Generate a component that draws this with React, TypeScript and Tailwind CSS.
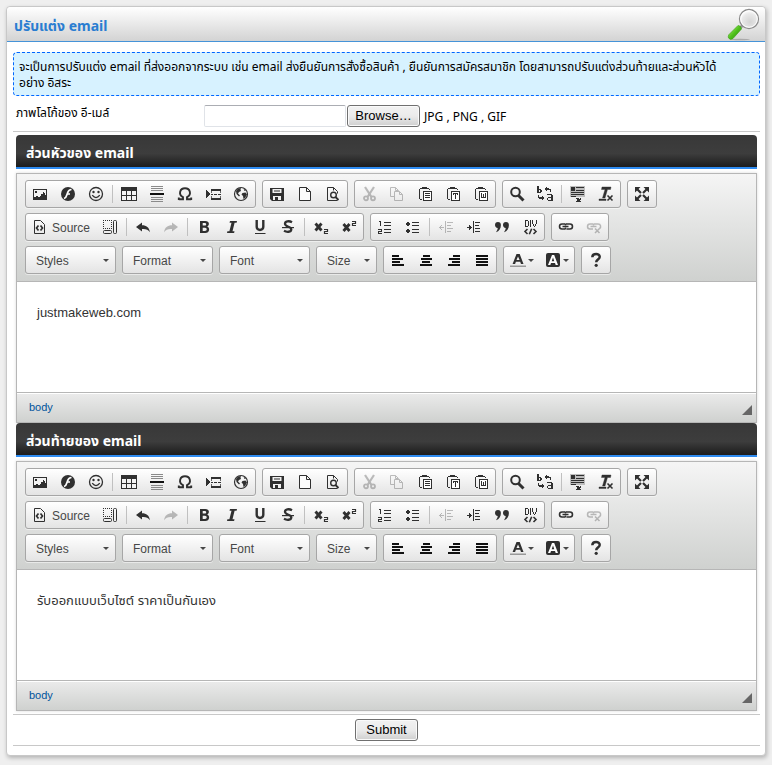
import React from 'react';
import clsx from 'clsx';

function Icon({ children, crisp = true }: { children: React.ReactNode; crisp?: boolean }) {
  return (
    <svg width="16" height="16" viewBox="0 0 16 16" fill="#303030" shapeRendering={crisp ? 'crispEdges' : 'auto'} aria-hidden="true" className="shrink-0">
      {children}
    </svg>
  );
}

const clipboard = (
  <g>
    <path d="M5 1h5v1h2v1H3V2h2zM2 3h1v1H2zM2 4h1v9H2zM3 13h2v1H3zM12 3h1v1h-1z" />
    <path d="M6 5h9v10H6z" />
    <path d="M7 6h7v8H7z" fill="#fff" />
  </g>
);

const icons: Record<string, React.ReactNode> = {
  image: (
    <Icon>
      <path d="M1 3h14v11H1z" />
      <path d="M2 4h12v9H2z" fill="#f4f4f4" />
      <path d="M3 5h2v2H3zM11 6h1v1h1v2h1v4H2v-2h2v-1h2v1h2v-1h1V8h2z" />
    </Icon>
  ),
  flash: (
    <Icon crisp={false}>
      <circle cx="8" cy="8" r="7" />
      <path d="M11.5 3.5C8 3.500 8 6 7 8.500 6.500 10.500 5.500 12 4 12.500M6.500 8H10" stroke="#fff" strokeWidth="1.700" fill="none" />
    </Icon>
  ),
  smiley: (
    <Icon crisp={false}>
      <circle cx="8" cy="8" r="6.500" fill="none" stroke="#303030" strokeWidth="1.300" />
      <circle cx="5.500" cy="6" r="1.200" />
      <circle cx="10.500" cy="6" r="1.200" />
      <path d="M4.200 9.200Q8 14 11.800 9.200" fill="none" stroke="#303030" strokeWidth="1.300" />
    </Icon>
  ),
  table: (
    <Icon>
      <path d="M0 1h16v14H0z" />
      <path d="M1 5h4v4H1zM6 5h4v4H6zM11 5h4v4h-4zM1 10h4v4H1zM6 10h4v4H6zM11 10h4v4h-4z" fill="#f4f4f4" />
    </Icon>
  ),
  rule: (
    <Icon>
      <path d="M2 0h12v1H2zM2 2h12v1H2zM2 4h12v1H2zM2 11h12v1H2zM2 13h12v1H2zM2 15h12v1H2z" fill="#8a8a8a" />
      <path d="M1 7h14v2H1z" fill="#111" />
    </Icon>
  ),
  omega: (
    <Icon crisp={false}>
      <path d="M1.800 14v-2.500M1.800 13.200h4.200V11.200C1 8.500 2.800 2.200 8 2.200S15 8.500 10 11.200v2h4.200M14.200 14v-2.500" fill="none" stroke="#303030" strokeWidth="1.900" />
    </Icon>
  ),
  pagebreak: (
    <Icon>
      <path d="M1 4h1v1h1v1h1v1h1v2H4v1H3v1H2v1H1zM6 3h10v2H6zM6 8h2v1H6zM9 8h3v1H9zM13 8h3v1h-3zM6 12h10v2H6z" />
      <path d="M6 5h1v2H6zM15 5h1v2h-1zM6 10h1v2H6zM15 10h1v2h-1z" fill="#666" />
    </Icon>
  ),
  globe: (
    <Icon crisp={false}>
      <circle cx="8" cy="8" r="6.500" fill="none" stroke="#303030" strokeWidth="1.200" />
      <path d="M3 5l2-2.500 3-.5-.5 1.500L8 5 6 6 5 7.500 7 9.500 6 10.500 3.500 8zM9.500 7l3-.5 1.500 2-2 3.500-1.500 1-.5-3-1.500-1.500zM10.500 2.500l2.500 2-1.500.5z" />
    </Icon>
  ),
  save: (
    <Icon crisp={false}>
      <path d="M1 2h14v13H3l-2-2z" />
      <path d="M3.500 3h9v4h-9zM4 10h8v4H4z" fill="#f2f2f2" />
      <path d="M6 11h3v3H6zM5 4.500h6v1H5z" />
    </Icon>
  ),
  page: (
    <Icon crisp={false}>
      <path d="M2.500 1.500h7l4 4v9h-11zM9.500 1.500v4h4" fill="#fbfbfb" stroke="#303030" />
    </Icon>
  ),
  preview: (
    <Icon crisp={false}>
      <path d="M12.500 14.500h-10v-13h6l4 4v2M8.500 1.500v3" fill="none" stroke="#303030" />
      <circle cx="8.500" cy="9" r="2.800" fill="#f4f4f4" stroke="#303030" strokeWidth="1.400" />
      <path d="M10.500 11l3 3" stroke="#303030" strokeWidth="1.800" />
    </Icon>
  ),
  cut: (
    <Icon crisp={false}>
      <path d="M4 1l6.500 10M13 1L6.500 11" stroke="#303030" strokeWidth="2.200" />
      <circle cx="5" cy="12.300" r="2" fill="none" stroke="#303030" strokeWidth="1.800" />
      <circle cx="12" cy="12.300" r="2" fill="none" stroke="#303030" strokeWidth="1.800" />
    </Icon>
  ),
  copy: (
    <Icon crisp={false}>
      <path d="M5.500 10.500h-4v-9h5l3 3M6.500 1.500v3h3M5.500 5.500h5l3 3v6h-8zM10.500 5.500v3h3" fill="none" stroke="#303030" />
    </Icon>
  ),
  paste: (
    <Icon>
      {clipboard}
      <path d="M8 7h5v1H8zM8 9h5v1H8zM8 11h5v1H8z" />
    </Icon>
  ),
  pasteText: (
    <Icon>
      {clipboard}
      <path d="M8 7h5v2h-1V8h-1v5h-1V8H9v1H8z" />
    </Icon>
  ),
  pasteWord: (
    <Icon>
      {clipboard}
      <path d="M8 7h1v4h1V8h1v3h1V7h1v5H8z" />
    </Icon>
  ),
  find: (
    <Icon crisp={false}>
      <circle cx="6.500" cy="6" r="4.300" fill="none" stroke="#303030" strokeWidth="2" />
      <path d="M9.500 9.500l5 5" stroke="#303030" strokeWidth="3" />
    </Icon>
  ),
  replace: (
    <Icon>
      <path d="M0 0h2v3h2v1h1v2H4v1H0zM2 4v2h1V4zM10 8h5v1h1v6h-5v-1h-1v-2h1v-1h3V9h-4zM11 12v2h3v-2z" fillRule="evenodd" />
      <path d="M9 1h1v1h2v1h2v3h-1V4h-3v1H9V4H8V2h1zM1 9h1v2h3v-1h1v1h1v2H6v1H5v-1H2v-1H1z" />
    </Icon>
  ),
  selectAll: (
    <Icon>
      <path d="M0 0h15v11H0z" fill="#bdbdbd" />
      <path d="M1 1h4v4H1zM6 1h8v1H6zM6 4h8v1H6zM1 6h13v1H1zM1 8h13v1H1zM1 10h5v1H1zM6 12h3v1h1v-1h1v2h-1v1h1v1H6v-1h1v-2H6z" />
    </Icon>
  ),
  removeFormat: (
    <Icon crisp={false}>
      <path d="M4 1h9l-.5 2.500h-3L7 12H4.500L7 3.500H3.500zM1 13h7v1.500H1z" stroke="#303030" strokeWidth=".4" />
      <path d="M9.500 9.500l5 5M14.500 9.500l-5 5" stroke="#303030" strokeWidth="1.600" />
    </Icon>
  ),
  maximize: (
    <Icon crisp={false}>
      <path d="M1 1h5.500L1 6.500zM15 1H9.500L15 6.500zM1 15h5.500L1 9.500zM15 15H9.500L15 9.500z" />
      <path d="M2 2l5 5M14 2L9 7M2 14l5-5M14 14L9 9" stroke="#303030" strokeWidth="2.200" />
    </Icon>
  ),
  source: (
    <Icon crisp={false}>
      <path d="M2.500 1.500h6l4 4v9h-10z" fill="none" stroke="#303030" />
      <path d="M6.500 6.500L4.500 9l2 2.500M8.500 6.500l2 2.500-2 2.500" fill="none" stroke="#303030" strokeWidth="1.700" />
    </Icon>
  ),
  blocks: (
    <Icon crisp={false}>
      <path d="M1.500 1v9M1 1.500h9M9.500 1v9M1 9.500h9" fill="none" stroke="#303030" strokeDasharray="1 1" />
      <rect x="1.500" y="11.500" width="8" height="3" rx="1" fill="none" stroke="#303030" />
      <rect x="11.500" y="1.500" width="3" height="13" rx="1" fill="none" stroke="#303030" />
    </Icon>
  ),
  undo: (
    <Icon crisp={false}>
      <path d="M1 8L7 3.500v2.800c4.500 0 7 2 8 7-2-2.500-4-3.500-8-3.200v2.400z" />
    </Icon>
  ),
  redo: (
    <Icon crisp={false}>
      <path d="M15 8L9 3.500v2.800c-4.500 0-7 2-8 7 2-2.500 4-3.500 8-3.200v2.400z" />
    </Icon>
  ),
  bold: (
    <Icon crisp={false}>
      <path d="M4 2h5.300c4.500 0 4.500 4.600 1.800 5.500C14.300 8.500 13.800 14 9.300 14H4zM6.700 4v2.600h2c2 0 2-2.600 0-2.600zM6.700 8.700v3.200h2.300c2.300 0 2.300-3.200 0-3.200z" fillRule="evenodd" />
    </Icon>
  ),
  italic: (
    <Icon crisp={false}>
      <path d="M6 2h7l-.4 1.800h-2L8.500 12.200h2l-.4 1.800H3l.4-1.800h2L7.500 3.800h-2z" />
    </Icon>
  ),
  underline: (
    <Icon crisp={false}>
      <path d="M3.500 1h2.400v6.500c0 3 4.200 3 4.200 0V1h2.400v7c0 5.500-9 5.500-9 0zM3 14h10.500v1H3z" />
    </Icon>
  ),
  strike: (
    <Icon crisp={false}>
      <path d="M12 3.200C9 1.500 4.800 2.200 5 5c.3 3 6.500 2.500 6.300 5.300-.2 3-4.500 3-7.300 1.500" fill="none" stroke="#303030" strokeWidth="2.300" />
      <path d="M2 8h12v1.200H2z" />
    </Icon>
  ),
  sub: (
    <Icon crisp={false}>
      <path d="M2.500 4.500l6 7M8.500 4.500l-6 7" stroke="#303030" strokeWidth="2.800" />
      <path d="M11 10.500h3.500v2H11.500v2H15" fill="none" stroke="#303030" strokeWidth="1.200" />
    </Icon>
  ),
  sup: (
    <Icon crisp={false}>
      <path d="M2.500 5l6 7M8.500 5l-6 7" stroke="#303030" strokeWidth="2.800" />
      <path d="M11 2.500h3.500v2H11.500v2H15" fill="none" stroke="#303030" strokeWidth="1.200" />
    </Icon>
  ),
  numbered: (
    <Icon>
      <path d="M2 2h2v5H3V3H2zM1 10h4v3H2v1h3v1H1v-3h3v-1H1zM7 3h7v1H7zM7 6h7v1H7zM7 10h7v1H7zM7 13h7v1H7z" />
    </Icon>
  ),
  bulleted: (
    <Icon>
      <path d="M2 3h2v1h1v2H4v1H2V6H1V4h1zM2 10h2v1h1v2H4v1H2v-1H1v-2h1zM7 3h7v1H7zM7 6h7v1H7zM7 10h7v1H7zM7 13h7v1H7z" />
    </Icon>
  ),
  outdent: (
    <Icon>
      <path d="M7 2h1v12H7zM9 3h6v1H9zM9 6h4v1H9zM9 9h6v1H9zM9 12h4v1H9zM1 8h5v1H1zM2 7h1v3H2zM3 6h1v1H3zM3 10h1v1H3z" />
    </Icon>
  ),
  indent: (
    <Icon>
      <path d="M7 2h1v12H7zM9 3h5v1H9zM9 6h4v1H9zM9 9h5v1H9zM9 12h5v1H9zM1 8h5v1H1zM4 7h1v3H4zM3 6h1v5H3z" />
    </Icon>
  ),
  quote: (
    <Icon crisp={false}>
      <path d="M1 6a2.900 2.900 0 1 1 5.900 0c0 3.500-1.600 6.300-4.900 7.300 1-1.500 1.700-2.800 1.700-4.200C2 8.800 1 7.500 1 6zM9 6a2.900 2.900 0 1 1 5.900 0c0 3.500-1.600 6.300-4.900 7.300 1-1.500 1.700-2.800 1.700-4.200C10 8.800 9 7.500 9 6z" />
    </Icon>
  ),
  div: (
    <Icon>
      <path d="M3 1h3v1h1v5H6v1H3zM4 2v5h2V2zM8 1h1v7H8zM10 1h1v4h1v2h1V5h1V1h1v4h-1v2h-1v1h-1V7h-1V5h-1z" fillRule="evenodd" />
      <path d="M5.500 10L3 12.500 5.500 15M11.500 10l2.500 2.500-2.500 2.500M9.700 9.800l-2.400 5.400" fill="none" stroke="#303030" strokeWidth="1.600" shapeRendering="auto" />
    </Icon>
  ),
  link: (
    <Icon crisp={false}>
      <path d="M7 5H4C.7 5 .7 10 4 10h3M8 5h4c3.300 0 3.300 5 0 5H8.500M4.500 7.500h6" fill="none" stroke="#303030" strokeWidth="1.600" />
      <path d="M7.500 4.500v2M7.500 8.500v2" stroke="#303030" strokeWidth="1.500" />
    </Icon>
  ),
  unlink: (
    <Icon crisp={false}>
      <path d="M7 5H4C.7 5 .7 10 4 10h3M8 5h4c3 0 3.300 3.500 1.500 4.500M4.500 7.500h6M7.500 4.500v2M9 9.500l4.500 4.500M13.500 9.500L9 14" fill="none" stroke="#303030" strokeWidth="1.500" />
    </Icon>
  ),
  left: (
    <Icon>
      <path d="M2 3h7v2H2zM2 6h11v2H2zM2 9h8v2H2zM2 12h12v2H2z" fill="#111" />
    </Icon>
  ),
  center: (
    <Icon>
      <path d="M5 3h7v2H5zM3 6h11v2H3zM4 9h8v2H4zM2 12h12v2H2z" fill="#111" />
    </Icon>
  ),
  right: (
    <Icon>
      <path d="M7 3h7v2H7zM3 6h11v2H3zM6 9h8v2H6zM2 12h12v2H2z" fill="#111" />
    </Icon>
  ),
  justify: (
    <Icon>
      <path d="M2 3h12v2H2zM2 6h12v2H2zM2 9h12v2H2zM2 12h12v2H2z" fill="#111" />
    </Icon>
  ),
  textColor: (
    <Icon crisp={false}>
      <path d="M6.500 2h3.200L13.500 12H11l-.8-2.200H5.900L5.100 12H2.600zM8 4.500L6.500 8h3.100z" fillRule="evenodd" />
      <path d="M0 13.500h16V15H0z" fill="#999" />
    </Icon>
  ),
  bgColor: (
    <Icon crisp={false}>
      <rect x="1" y="1" width="14" height="14" rx="2" />
      <path d="M7 3h2.200L13 13h-2.300L10 11H6l-.7 2H3zM8 5.500L6.700 9.200h2.600z" fill="#fff" fillRule="evenodd" />
    </Icon>
  ),
  help: (
    <Icon crisp={false}>
      <path d="M4.300 5.200C4.500.9 11.900 1.200 11.700 5c-.1 2.500-3.500 2.700-3.500 5.200" fill="none" stroke="#303030" strokeWidth="2.500" />
      <circle cx="8.200" cy="13.300" r="1.600" />
    </Icon>
  ),
};

type Item = { icon: string; label: string; disabled?: boolean; text?: string; menu?: boolean } | '|';

const rowOne: Item[][] = [
  [
    { icon: 'image', label: 'Image' },
    { icon: 'flash', label: 'Flash' },
    { icon: 'smiley', label: 'Smiley' },
    '|',
    { icon: 'table', label: 'Table' },
    { icon: 'rule', label: 'Insert Horizontal Line' },
    { icon: 'omega', label: 'Insert Special Character' },
    { icon: 'pagebreak', label: 'Insert Page Break' },
    { icon: 'globe', label: 'IFrame' },
  ],
  [
    { icon: 'save', label: 'Save' },
    { icon: 'page', label: 'New Page' },
    { icon: 'preview', label: 'Preview' },
  ],
  [
    { icon: 'cut', label: 'Cut', disabled: true },
    { icon: 'copy', label: 'Copy', disabled: true },
    { icon: 'paste', label: 'Paste' },
    { icon: 'pasteText', label: 'Paste as plain text' },
    { icon: 'pasteWord', label: 'Paste from Word' },
  ],
  [
    { icon: 'find', label: 'Find' },
    { icon: 'replace', label: 'Replace' },
    '|',
    { icon: 'selectAll', label: 'Select All' },
    { icon: 'removeFormat', label: 'Remove Format' },
  ],
  [{ icon: 'maximize', label: 'Maximize' }],
];

const rowTwo: Item[][] = [
  [
    { icon: 'source', label: 'Source', text: 'Source' },
    { icon: 'blocks', label: 'Show Blocks' },
    '|',
    { icon: 'undo', label: 'Undo' },
    { icon: 'redo', label: 'Redo', disabled: true },
    '|',
    { icon: 'bold', label: 'Bold' },
    { icon: 'italic', label: 'Italic' },
    { icon: 'underline', label: 'Underline' },
    { icon: 'strike', label: 'Strike Through' },
    '|',
    { icon: 'sub', label: 'Subscript' },
    { icon: 'sup', label: 'Superscript' },
  ],
  [
    { icon: 'numbered', label: 'Numbered List' },
    { icon: 'bulleted', label: 'Bulleted List' },
    '|',
    { icon: 'outdent', label: 'Decrease Indent', disabled: true },
    { icon: 'indent', label: 'Increase Indent' },
    { icon: 'quote', label: 'Block Quote' },
    { icon: 'div', label: 'Create Div Container' },
  ],
  [
    { icon: 'link', label: 'Link' },
    { icon: 'unlink', label: 'Unlink', disabled: true },
  ],
];

const rowThree: Item[][] = [
  [
    { icon: 'left', label: 'Align Left' },
    { icon: 'center', label: 'Center' },
    { icon: 'right', label: 'Align Right' },
    { icon: 'justify', label: 'Justify' },
  ],
  [
    { icon: 'textColor', label: 'Text Color', menu: true },
    { icon: 'bgColor', label: 'Background Color', menu: true },
  ],
  [{ icon: 'help', label: 'About' }],
];

const groupStyle = 'flex h-7 rounded-[3px] border border-[#a6a6a6] bg-linear-to-b from-white to-[#e4e4e4] shadow-[0_1px_0_rgba(255,255,255,.5)]';

function Caret() {
  return (
    <svg width="6" height="3" viewBox="0 0 6 3" aria-hidden="true" className="shrink-0">
      <path d="M0 0h6L3 3z" fill="#474747" />
    </svg>
  );
}

function ToolGroup({ items }: { items: Item[] }) {
  return (
    <div className={groupStyle}>
      {items.map((item, i) =>
        item === '|' ? (
          <span key={i} className="mx-0.5 my-1 w-px bg-[#c0c0c0]" />
        ) : (
          <button
            key={i}
            type="button"
            aria-label={item.label}
            disabled={item.disabled}
            className={clsx(
              'flex items-center',
              item.text && 'w-[70px] gap-1 pl-1.5 text-xs text-[#484848]',
              item.menu && 'w-[35px] gap-0.5 pl-1.5',
              !item.text && !item.menu && 'w-7 justify-center',
              item.disabled && 'opacity-30',
            )}
          >
            {icons[item.icon]}
            {item.text && <span className="pt-0.5">{item.text}</span>}
            {item.menu && <Caret />}
          </button>
        ),
      )}
    </div>
  );
}

function Combo({ name, small }: { name: string; small?: boolean }) {
  return (
    <div className={clsx(groupStyle, 'relative items-center', small ? 'w-[61px]' : 'w-[91px]')}>
      <select aria-label={name} className="h-full w-full appearance-none bg-transparent pt-0.5 pl-2.5 text-xs text-[#474747] outline-none">
        <option>{name}</option>
      </select>
      <span className="pointer-events-none absolute right-1.5">
        <Caret />
      </span>
    </div>
  );
}

function Editor({ title, content }: { title: string; content: string }) {
  return (
    <section>
      <h2 className="flex h-[34px] items-center rounded-t border-b-2 border-[#2e8bf0] bg-linear-to-b from-[#383838] from-0% via-[#3d3d3d] via-58% to-[#1c1c1c] pt-1 pl-2.5 text-sm font-bold text-white">
        {title}
      </h2>
      <div className="mt-1 border border-[#b6b6b6] bg-white font-['Liberation_Sans','Noto_Sans_Thai',Arial,sans-serif] shadow-[0_0_3px_rgba(0,0,0,.15)]">
        <div className="flex flex-col gap-[5px] border-b border-[#b6b6b6] bg-linear-to-b from-[#f5f5f5] to-[#cfd1cf] px-2 pt-1.5 pb-[7px]">
          <div className="flex flex-wrap gap-1.5">
            {rowOne.map((items, i) => <ToolGroup key={i} items={items} />)}
          </div>
          <div className="flex flex-wrap gap-1.5">
            {rowTwo.map((items, i) => <ToolGroup key={i} items={items} />)}
          </div>
          <div className="flex flex-wrap gap-1.5">
            <Combo name="Styles" />
            <Combo name="Format" />
            <Combo name="Font" />
            <Combo name="Size" small />
            {rowThree.map((items, i) => <ToolGroup key={i} items={items} />)}
          </div>
        </div>
        <textarea
          aria-label={title}
          defaultValue={content}
          className="block h-[110px] w-full resize-none p-5 text-[13px] leading-[22px] text-[#333] outline-none"
        />
        <div className="flex h-[30px] items-center justify-between border-t border-[#b6b6b6] bg-linear-to-b from-[#ebebeb] to-[#cfd1cf] pr-1 pl-3 shadow-[inset_0_1px_0_#fff]">
          <a href="#body" className="text-[11px] text-[#00539c]">body</a>
          <svg width="10" height="10" viewBox="0 0 10 10" aria-hidden="true" className="mt-1">
            <path d="M10 0v10H0z" fill="#666" />
          </svg>
        </div>
      </div>
    </section>
  );
}

function Magnifier() {
  return (
    <svg width="34" height="34" viewBox="0 0 34 34" aria-hidden="true">
      <defs>
        <radialGradient id="lens" cx=".55" cy=".65" r=".6">
          <stop offset="0" stopColor="#d4d4d4" />
          <stop offset=".7" stopColor="#e9e9e9" />
          <stop offset="1" stopColor="#fff" />
        </radialGradient>
        <linearGradient id="handle" x1="0" y1="0" x2="1" y2="1">
          <stop offset=".25" stopColor="#8be04c" />
          <stop offset=".5" stopColor="#4fc01c" />
          <stop offset="1" stopColor="#2a8a0a" />
        </linearGradient>
      </defs>
      <ellipse cx="13" cy="32.500" rx="10" ry=".8" fill="#000" opacity=".2" />
      <path d="M12 22l4-4" stroke="#999" strokeWidth="3" />
      <path d="M11 18.500q3 0 3.500 3.500L6 31.500q-3 2-4.500-.5-.8-2 .5-3.500z" fill="url(#handle)" stroke="#38a012" strokeWidth=".6" />
      <circle cx="22" cy="12" r="9.500" fill="url(#lens)" stroke="#8c8c8c" strokeWidth="1.300" />
      <circle cx="22" cy="12" r="8.300" fill="none" stroke="#fff" />
    </svg>
  );
}

const nativeButton =
  "h-[22px] rounded-[3px] border border-[#707070] bg-linear-to-b from-[#f2f2f2] from-0% via-[#ebebeb] via-50% to-[#cfcfcf] font-['Liberation_Sans',Arial,sans-serif] text-[13px] leading-5 text-black shadow-[inset_0_0_0_1px_#fafafa]";

export default function App() {
  return (
    <div className="min-h-screen bg-[#efefef] px-1.5 pt-1.5 pb-[9px] font-['Noto_Sans','Noto_Sans_Thai','Open_Sans',sans-serif] text-xs text-black">
      <main className="rounded border border-[#c8c8c8] bg-white shadow-[1px_2px_4px_rgba(0,0,0,.25)]">
        <header className="flex h-[35px] items-center justify-between rounded-t border-b border-[#4593d8] bg-linear-to-b from-white to-[#d3d3d3] pr-1 pl-[7px]">
          <h1 className="pt-1 text-sm font-bold text-[#2a7dd1]">ปรับแต่ง email</h1>
          <Magnifier />
        </header>

        <form className="pt-2.5 pr-[5px] pb-[9px] pl-1.5" onSubmit={(e) => e.preventDefault()}>
          <p className="rounded border border-dashed border-[#0066ff] bg-[#d7f2ff] px-[5px] pt-1.5 pb-1 leading-4">
            จะเป็นการปรับแต่ง email ที่ส่งออกจากระบบ เช่น email ส่งยืนยันการสั่งซื้อสินค้า , ยืนยันการสมัครสมาชิก โดยสามารถปรับแต่งส่วนท้ายและส่วนหัวได้
            <br />
            อย่าง อิสระ
          </p>

          <div className="flex border-b border-[#c8c8c8] pt-[9px] pb-1 pl-[3px]">
            <label htmlFor="logo" className="w-[188px] leading-4">ภาพโลโก้ของ อี-เมล์</label>
            <div className="flex items-center">
              <input id="logo" type="text" className="h-[22px] w-[142px] rounded-xs border border-[#e0e3e8] border-t-[#abadb3] bg-white px-1" />
              <button type="button" className={clsx(nativeButton, 'ml-px w-[73px]')}>Browse…</button>
              <span className="ml-1 pt-0.5">JPG , PNG , GIF</span>
            </div>
          </div>

          <div className="p-[3px]">
            <Editor title="ส่วนหัวของ email" content="justmakeweb.com" />
            <Editor title="ส่วนท้ายของ email" content="รับออกแบบเว็บไซต์ ราคาเป็นกันเอง" />
          </div>

          <div className="flex justify-center border-y border-[#c8c8c8] py-1">
            <button type="submit" className={clsx(nativeButton, 'w-[63px]')}>Submit</button>
          </div>
        </form>
      </main>
    </div>
  );
}
